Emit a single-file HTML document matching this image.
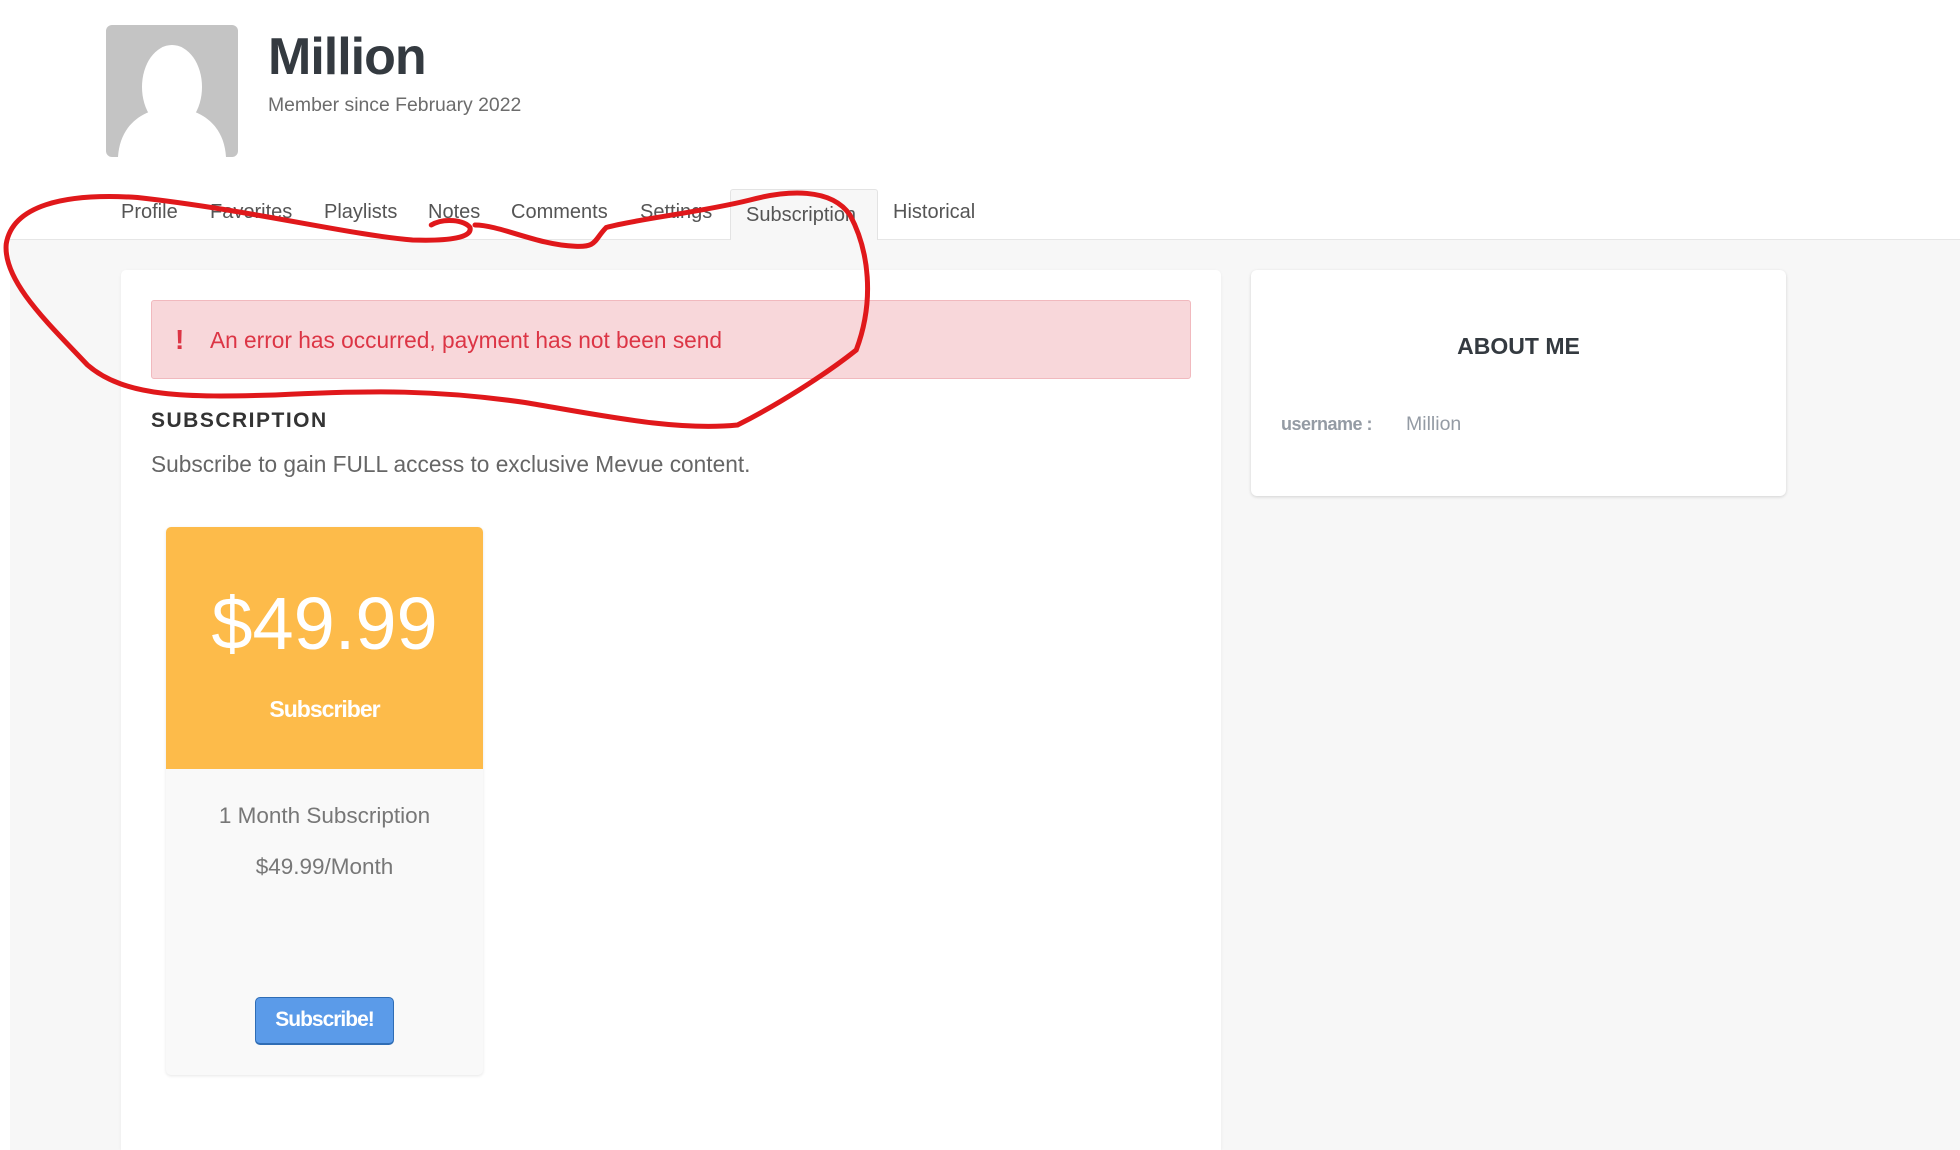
<!DOCTYPE html>
<html><head><meta charset="utf-8"><style>
*{margin:0;padding:0;box-sizing:border-box}
html,body{width:1960px;height:1150px;overflow:hidden}
body{background:#fff;font-family:"Liberation Sans",sans-serif;position:relative}
.abs{position:absolute}
.gray{left:10px;top:239px;width:1950px;height:911px;background:#f7f7f7;border-top:1px solid #e6e6e6}
.tab{position:absolute;top:201px;font-size:20px;color:#555;white-space:nowrap}
</style></head><body>
<div class="abs" style="left:106px;top:25px;width:132px;height:132px;background:#c4c4c4;border-radius:6px;overflow:hidden">
<svg width="132" height="132" viewBox="0 0 132 132"><ellipse cx="66" cy="62" rx="30" ry="42" fill="#fff"/><path d="M12 132 C14 100 36 84 66 82 C96 84 118 100 120 132 Z" fill="#fff"/></svg></div>
<div class="abs" style="left:268px;top:27px;font-size:52px;font-weight:bold;color:#343a40;letter-spacing:-1px">Million</div>
<div class="abs" style="left:268px;top:94px;font-size:19.4px;color:#6c6c6c">Member since February 2022</div>
<div class="abs gray"></div>
<div class="abs" style="left:730px;top:189px;width:148px;height:51px;background:#f7f7f7;border:1px solid #e3e3e3;border-bottom:none;border-radius:3px 3px 0 0"></div>
<div class="tab" style="left:121px">Profile</div>
<div class="tab" style="left:210px">Favorites</div>
<div class="tab" style="left:324px">Playlists</div>
<div class="tab" style="left:428px">Notes</div>
<div class="tab" style="left:511px">Comments</div>
<div class="tab" style="left:640px">Settings</div>
<div class="tab" style="left:746px;top:204px">Subscription</div>
<div class="tab" style="left:893px">Historical</div>
<div class="abs" style="left:121px;top:270px;width:1100px;height:880px;background:#fff;border-radius:5px 5px 0 0;box-shadow:0 1px 3px rgba(0,0,0,.06)"></div>
<div class="abs" style="left:151px;top:300px;width:1040px;height:79px;background:#f8d7da;border:1px solid #f1b9be;border-radius:3px"></div>
<div class="abs" style="left:175px;top:324px;font-size:28px;font-weight:bold;color:#dc3545">!</div>
<div class="abs" style="left:210px;top:327px;font-size:22.7px;color:#dc3545">An error has occurred, payment has not been send</div>
<div class="abs" style="left:151px;top:409px;font-size:21px;font-weight:bold;color:#333;letter-spacing:1.5px">SUBSCRIPTION</div>
<div class="abs" style="left:151px;top:451px;font-size:22.7px;color:#666">Subscribe to gain FULL access to exclusive Mevue content.</div>
<div class="abs" style="left:166px;top:527px;width:317px;height:548px;background:#f9f9f9;border-radius:5px;box-shadow:0 1px 3px rgba(0,0,0,.1);overflow:hidden">
<div style="height:242px;background:#fdbb4a;text-align:center;color:#fff">
<div style="padding-top:55px;font-size:74px;line-height:84px">$49.99</div>
<div style="margin-top:30px;font-size:23px;font-weight:bold;letter-spacing:-1px">Subscriber</div></div>
<div style="text-align:center;color:#777;font-size:22.5px;margin-top:34px">1 Month Subscription</div>
<div style="text-align:center;color:#777;font-size:22.5px;margin-top:25px">$49.99/Month</div>
</div>
<div class="abs" style="left:255px;top:997px;width:139px;height:48px;background:#5b9be9;border:1px solid #2f6db5;border-bottom-width:2px;border-radius:5px;color:#fff;font-weight:bold;font-size:21px;text-align:center;line-height:44px;letter-spacing:-1px">Subscribe!</div>
<div class="abs" style="left:1251px;top:270px;width:535px;height:226px;background:#fff;border-radius:6px;box-shadow:0 1px 3px rgba(0,0,0,.15)"></div>
<div class="abs" style="left:1251px;top:333px;width:535px;text-align:center;font-size:23px;font-weight:bold;color:#343a40">ABOUT ME</div>
<div class="abs" style="left:1281px;top:414px;font-size:18px;font-weight:bold;color:#949ba4;letter-spacing:-0.5px">username :</div>
<div class="abs" style="left:1406px;top:413px;font-size:19.5px;color:#949ba4">Million</div>
<svg class="abs" style="left:0;top:0" width="1960" height="1150" viewBox="0 0 1568 920">
<path d="M345 180 C355 174 372 176 376 182 C378 190 360 193 330 192 C280 188 200 168 110 158 C50 154 10 165 5 195 C2 225 40 260 70 292 C100 318 150 318 220 316 C300 312 350 312 420 322 C480 332 540 345 590 340 C620 325 660 300 685 280 C700 240 695 200 680 172 C665 150 630 152 600 160 C560 170 510 175 485 182 C475 192 478 198 460 197 C430 196 400 180 380 180" fill="none" stroke="#e0181b" stroke-width="4" stroke-linecap="round"/>
</svg>
</body></html>
